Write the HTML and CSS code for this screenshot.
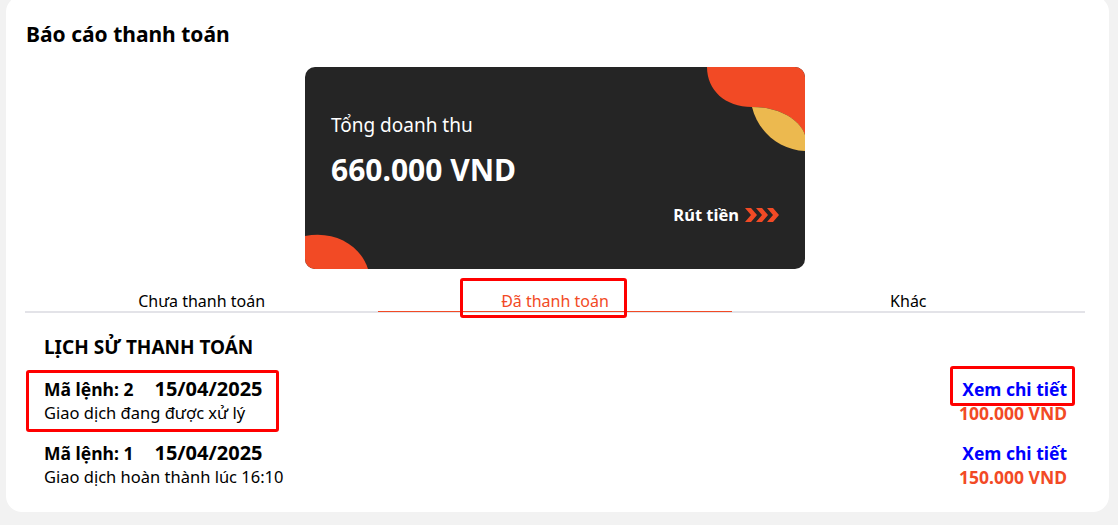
FILE: index.html
```html
<!DOCTYPE html>
<html lang="vi">
<head>
<meta charset="utf-8">
<link rel="stylesheet" href="styles.css">
</head>
<body>
<div class="panel">
  <h1 class="title">Báo cáo thanh toán</h1>
  <div class="card-wrap">
    <div class="revenue">
      <svg class="deco-tr" viewBox="0 0 100 85" width="100" height="85">
        <path d="M2 0 C2 23 20 40 47 40 C75 40 95 53 100 68 L100 0 Z" fill="#f24a25"/>
        <path d="M47 40 C75 40 95 53 100 68 L100 84 C75 83 53 65 47 40 Z" fill="#ecb94f"/>
      </svg>
      <svg class="deco-bl" viewBox="0 0 64 36" width="64" height="36">
        <path d="M0 3 C30 -3 56 13 63 36 L0 36 Z" fill="#f24a25"/>
      </svg>
      <div class="rev-label">Tổng doanh thu</div>
      <div class="rev-amount">660.000 VND</div>
      <div class="withdraw">
        <span>Rút tiền</span>
        <svg class="arrows" viewBox="0 0 34 14" width="34" height="14">
          <path d="M0 0 L6 0 L12 7 L6 14 L0 14 L6 7 Z M11 0 L17 0 L23 7 L17 14 L11 14 L17 7 Z M22 0 L28 0 L34 7 L28 14 L22 14 L28 7 Z" fill="#f24a25"/>
        </svg>
      </div>
    </div>
  </div>
  <div class="tabs">
    <div class="tab">Chưa thanh toán</div>
    <div class="tab active">Đã thanh toán<span class="mark mark-tab"></span></div>
    <div class="tab">Khác</div>
  </div>
  <div class="history">
    <h2 class="hist-title">LỊCH SỬ THANH TOÁN</h2>
    <div class="item">
      <div class="item-left">
        <div class="item-head"><span class="code">Mã lệnh: 2</span><span class="date">15/04/2025</span></div>
        <div class="status">Giao dịch đang được xử lý</div>
        <span class="mark mark-left"></span>
      </div>
      <div class="item-right">
        <a class="detail">Xem chi tiết<span class="mark mark-right"></span></a>
        <div class="amount">100.000 VND</div>
      </div>
    </div>
    <div class="item">
      <div class="item-left">
        <div class="item-head"><span class="code">Mã lệnh: 1</span><span class="date">15/04/2025</span></div>
        <div class="status">Giao dịch hoàn thành lúc 16:10</div>
      </div>
      <div class="item-right">
        <a class="detail">Xem chi tiết</a>
        <div class="amount">150.000 VND</div>
      </div>
    </div>
  </div>
</div>
</body>
</html>
```
FILE: styles.css
```css
* { box-sizing: border-box; }
html, body { margin: 0; padding: 0; }
body {
  background: #f2f2f2;
  font-family: "Noto Sans", "Open Sans", sans-serif;
  color: #000;
  width: 1118px;
  height: 525px;
  overflow: hidden;
}
.panel {
  margin: -4px 0 0 6px;
  width: 1103px;
  height: 516px;
  background: #fff;
  border-radius: 16px;
  padding: 21px 24px 0 19px;
}
.title {
  margin: 0 0 0 1px;
  font-size: 21px;
  font-weight: 700;
  line-height: 34px;
}
.card-wrap {
  display: flex;
  justify-content: center;
  margin-top: 16px;
}
.revenue {
  position: relative;
  width: 500px;
  height: 202px;
  background: #252525;
  border-radius: 10px;
  overflow: hidden;
  color: #fff;
  padding: 46px 26px 0 26px;
}
.deco-tr { position: absolute; top: 0; right: 0; display: block; }
.deco-bl { position: absolute; bottom: 0; left: 0; display: block; }
.rev-label {
  font-size: 19px;
  line-height: 24px;
}
.rev-amount {
  margin-top: 14px;
  font-size: 30px;
  font-weight: 700;
  line-height: 38px;
}
.withdraw {
  margin-top: 15px;
  display: flex;
  justify-content: flex-end;
  align-items: center;
  gap: 6px;
  font-size: 16.5px;
  font-weight: 700;
  line-height: 22px;
}
.arrows { display: block; }
.tabs {
  display: flex;
  margin-top: 22px;
  border-bottom: 2px solid #e3e3e8;
}
.tab {
  position: relative;
  flex: 1;
  text-align: center;
  font-size: 16px;
  line-height: 20px;
}
.tab.active {
  color: #f24a25;
  box-shadow: 0 1px 0 #f24a25;
}
.history { padding: 0 18px 0 19px; }
.hist-title {
  margin: 22px 0 0 0;
  font-size: 19px;
  font-weight: 700;
  line-height: 24px;
}
.item {
  display: flex;
  justify-content: space-between;
  margin-top: 18px;
}
.item + .item { margin-top: 16px; }
.item-left { position: relative; }
.item-head {
  display: flex;
  align-items: baseline;
  gap: 21px;
}
.code { font-size: 17.5px; font-weight: 700; line-height: 24px; }
.date { font-size: 20px; font-weight: 700; line-height: 24px; }
.status { font-size: 16.5px; line-height: 24px; }
.item-right {
  display: flex;
  flex-direction: column;
  align-items: flex-end;
}
.detail {
  position: relative;
  color: #0000ff;
  font-size: 17.5px;
  font-weight: 700;
  line-height: 24px;
}
.amount {
  color: #f24a25;
  font-size: 17.5px;
  font-weight: 700;
  line-height: 24px;
}
.mark {
  position: absolute;
  border: 3px solid #ff0000;
  border-radius: 3px;
  pointer-events: none;
}
.mark-tab { left: 82px; width: 167px; top: -13px; height: 40px; }
.mark-left { left: -18px; top: -7px; width: 253px; height: 62px; }
.mark-right { right: -8px; top: -11px; width: 125px; height: 40px; }
```
